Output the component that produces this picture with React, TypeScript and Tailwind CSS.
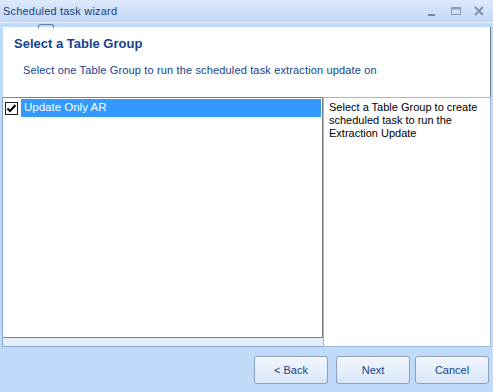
import React from 'react';

const font = { fontFamily: '"Liberation Sans", Arial, sans-serif' };

const WizardButton: React.FC<{ label: string }> = ({ label }) => (
  <button
    className="h-[28px] w-[74px] rounded-[3px] border border-[#8d9fba] bg-gradient-to-b from-[#f3f7fd] to-[#d9e6f8] text-[11px] text-[#15428b] shadow-[inset_0_1px_0_#ffffff]"
    style={font}
  >
    {label}
  </button>
);

export default function App() {
  return (
    <div className="w-[493px] h-[392px] bg-[#bfdbf9] flex flex-col overflow-hidden" style={font}>
      {/* title bar */}
      <div className="h-[23px] flex items-center justify-between bg-gradient-to-b from-[#dce9fb] to-[#c3d9f7] border-b border-[#e6f0ff] pl-[3px] pr-[8px]">
        <span className="text-[11px] tracking-[0.2px] text-[#1b3e7a]">Scheduled task wizard</span>
        <div className="flex items-center gap-[11px]">
          <svg width="12" height="12" viewBox="0 0 12 12">
            <rect x="1" y="9" width="7" height="2" fill="#6f87a9" />
          </svg>
          <svg width="12" height="12" viewBox="0 0 12 12">
            <rect x="1.5" y="2.5" width="9" height="7" fill="none" stroke="#8a9fbd" />
            <rect x="1.5" y="2.5" width="9" height="2" fill="#8a9fbd" />
          </svg>
          <svg width="12" height="12" viewBox="0 0 12 12">
            <path d="M2 2 L10 10 M10 2 L2 10" stroke="#7d93b3" strokeWidth="2" />
          </svg>
        </div>
      </div>

      <div className="h-[4px] relative">
        <div className="absolute left-[38px] top-[1px] w-[16px] h-[4px] rounded-t-[3px] border border-b-0 border-[#5f7fb0]" />
      </div>

      {/* header */}
      <div className="ml-[3px] mr-[2px] h-[70px] bg-white flex flex-col border-r border-[#6b7f99]">
        <div className="pl-[11px] pt-[7px] text-[13px] font-bold text-[#15428b]">Select a Table Group</div>
        <div className="pl-[20px] pt-[8px] text-[11px] tracking-[0.15px] text-[#15428b]">
          Select one Table Group to run the scheduled task extraction update on
        </div>
      </div>

      {/* content */}
      <div className="ml-[2px] mr-[2px] flex h-[250px]">
        <div className="w-[321px] flex flex-col border-l border-[#8aa7d6] border-b border-[#7f9db9] bg-[#e4eefd]">
          <div className="h-[241px] bg-white border-t border-r border-b border-[#808080]">
            <div className="flex items-center h-[18px] mt-[1px]">
              <div className="ml-[2px] w-[13px] h-[13px] border border-[#1c1c1c] bg-white flex items-center justify-center">
                <svg width="11" height="11" viewBox="0 0 11 11">
                  <path d="M1.5 5.5 L4 8 L9.5 2" fill="none" stroke="#000" strokeWidth="2" />
                </svg>
              </div>
              <div className="ml-[3px] w-[300px] h-[18px] bg-[#3399ff] text-white text-[11.5px] pl-[3px] flex items-center">
                Update Only AR
              </div>
            </div>
          </div>
        </div>
        <div className="flex-1 bg-white border border-[#9bb8e0] pl-[5px] pt-[3px] text-[11px] leading-[13px] text-black">
          Select a Table Group to create scheduled task to run the Extraction Update
        </div>
      </div>

      {/* buttons */}
      <div className="flex-1 flex items-center justify-end pr-[4px] pt-[1px]">
        <WizardButton label="< Back" />
        <div className="w-[8px]" />
        <WizardButton label="Next" />
        <div className="w-[5px]" />
        <WizardButton label="Cancel" />
      </div>
    </div>
  );
}
